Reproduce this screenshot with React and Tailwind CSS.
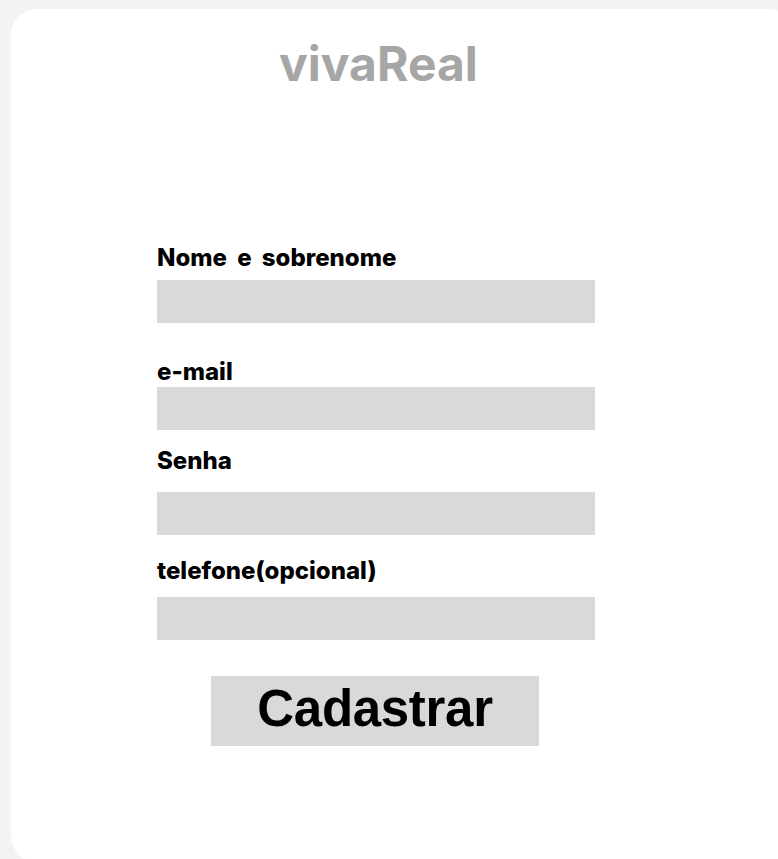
import React from 'react'

const fields = [
    { label: 'Nome e sobrenome', mt: 'mt-[158px]', gap: 'mt-[10px]' },
    { label: 'e-mail', mt: 'mt-[37px]', gap: 'mt-[3px]' },
    { label: 'Senha', mt: 'mt-[19px]', gap: 'mt-[19px]' },
    { label: 'telefone(opcional)', mt: 'mt-[24px]', gap: 'mt-[14px]' },
]

export default function App() {
    return (
        <div className="w-[778px] h-[859px] overflow-hidden bg-[#f3f3f3] pt-[9px] pl-[11px] font-['Inter','Liberation_Sans',sans-serif]">
            <div className="w-[784px] h-[853px] bg-white rounded-[26px] pt-[31px] pl-[146px]">
                <h1 className="ml-[122px] text-[48px] leading-none font-bold text-[#a6a6a6]">vivaReal</h1>

                {fields.map((f) => (
                    <div key={f.label} className={f.mt}>
                        <label className="block text-[24px] leading-none font-extrabold text-black [word-spacing:5px]">{f.label}</label>
                        <div className={`${f.gap} w-[438px] h-[43px] bg-[#d9d9d9]`} />
                    </div>
                ))}

                <button className="mt-[36px] ml-[54px] w-[328px] h-[70px] pb-[6px] bg-[#d9d9d9] flex items-center justify-center text-[51px] leading-none font-bold tracking-[-0.3px] text-black font-['Liberation_Sans',Arial,sans-serif]">
                    Cadastrar
                </button>
            </div>
        </div>
    )
}
